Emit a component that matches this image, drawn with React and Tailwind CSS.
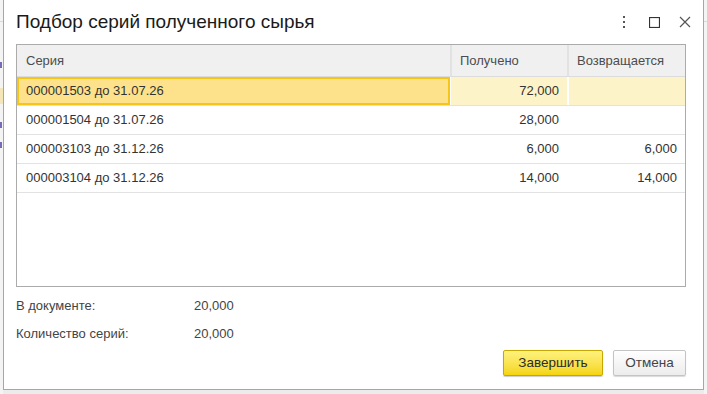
import React from "react";

const rows = [
  { name: "000001503 до 31.07.26", got: "72,000", back: "", selected: true },
  { name: "000001504 до 31.07.26", got: "28,000", back: "" },
  { name: "000003103 до 31.12.26", got: "6,000", back: "6,000" },
  { name: "000003104 до 31.12.26", got: "14,000", back: "14,000" },
];

const DotsIcon = () => (
  <svg width="4" height="12" viewBox="0 0 4 12">
    <rect x="1" y="0" width="2" height="2" fill="#555" />
    <rect x="1" y="5" width="2" height="2" fill="#555" />
    <rect x="1" y="10" width="2" height="2" fill="#555" />
  </svg>
);

const SquareIcon = () => (
  <svg width="11" height="11" viewBox="0 0 11 11">
    <rect x="0.5" y="0.5" width="10" height="10" fill="none" stroke="#333" strokeWidth="1.2" />
  </svg>
);

const CloseIcon = () => (
  <svg width="12" height="12" viewBox="0 0 12 12">
    <path d="M1 1 L11 11 M11 1 L1 11" stroke="#555" strokeWidth="1.2" />
  </svg>
);

const App = () => {
  return (
    <div
      className="w-[707px] h-[394px] flex bg-[#ececec] overflow-hidden text-[#333]"
      style={{ fontFamily: '"Liberation Sans", Arial, sans-serif' }}
    >
      {/* background window edge */}
      <div className="w-[3px] h-full flex flex-col bg-[#f4f4f4]">
        <div className="h-[22px] border-b border-[#d8d8d8]" />
        <div className="h-[40px]" />
        <div className="h-[6px] bg-[#7a68b8] w-[2px]" />
        <div className="h-[20px]" />
        <div className="h-[16px] bg-[#f4e6b8]" />
        <div className="h-[18px]" />
        <div className="h-[6px] bg-[#7a68b8] w-[2px]" />
        <div className="h-[14px]" />
        <div className="h-[6px] bg-[#7a68b8] w-[2px]" />
      </div>

      {/* dialog */}
      <div className="w-[701px] h-[390px] bg-white border-l border-r border-b border-[#a6a6a6] flex flex-col pl-[12px] pr-[17px]">
        <div className="h-[44px] flex items-center justify-between">
          <div className="text-[19px] text-[#1a1a1a] pt-[1px]">Подбор серий полученного сырья</div>
          <div className="flex items-center mr-[-17px]">
            <div className="w-[37px] flex justify-center">
              <DotsIcon />
            </div>
            <div className="w-[25px] flex justify-center">
              <SquareIcon />
            </div>
            <div className="w-[36px] flex justify-center">
              <CloseIcon />
            </div>
          </div>
        </div>

        {/* table */}
        <div className="h-[243px] border border-[#ababab] flex flex-col text-[13px]">
          <div className="h-[32px] flex bg-[#f0f0f0] border-b border-[#dcdcdc] text-[#4d4d4d]">
            <div className="w-[433px] flex items-center px-[9px]">Серия</div>
            <div className="w-[117px] flex items-center px-[8px] border-l-2 border-[#e2e2e2]">Получено</div>
            <div className="flex-1 flex items-center px-[8px] border-l-2 border-[#e2e2e2]">Возвращается</div>
          </div>
          {rows.map((r) => (
            <div
              key={r.name}
              className={
                r.selected
                  ? "h-[29px] flex border-b border-[#e2e2e2] bg-[#fdf3c8]"
                  : "h-[29px] flex border-b border-[#e2e2e2]"
              }
            >
              <div
                className={
                  r.selected
                    ? "w-[433px] flex items-center px-[7px] bg-[#fde28b] border-2 border-[#f5c518]"
                    : "w-[433px] flex items-center px-[9px]"
                }
              >
                {r.name}
              </div>
              <div
                className={
                  r.selected
                    ? "w-[117px] flex items-center justify-end pr-[8px] border-l border-white"
                    : "w-[117px] flex items-center justify-end pr-[8px]"
                }
              >
                {r.got}
              </div>
              <div
                className={
                  r.selected
                    ? "flex-1 flex items-center justify-end pr-[8px] border-l-2 border-white"
                    : "flex-1 flex items-center justify-end pr-[8px]"
                }
              >
                {r.back}
              </div>
            </div>
          ))}
        </div>

        {/* totals */}
        <div className="mt-[5px] flex flex-col text-[13px] text-[#444]">
          <div className="h-[28px] flex items-center">
            <div className="w-[178px]">В документе:</div>
            <div>20,000</div>
          </div>
          <div className="h-[28px] flex items-center">
            <div className="w-[178px]">Количество серий:</div>
            <div>20,000</div>
          </div>
        </div>

        <div className="mt-[2px] flex justify-end gap-[10px] text-[13.5px]">
          <button className="w-[100px] h-[26px] rounded-[2px] border border-[#c8a800] bg-gradient-to-b from-[#fff27a] to-[#f5d500] text-[#2b2b2b] shadow-[0_1px_1px_rgba(0,0,0,0.2)]">
            Завершить
          </button>
          <button className="w-[73px] h-[26px] rounded-[2px] border border-[#c4c4c4] bg-gradient-to-b from-white to-[#ececec] text-[#444] shadow-[0_1px_1px_rgba(0,0,0,0.15)]">
            Отмена
          </button>
        </div>
      </div>

      {/* background right edge */}
      <div className="w-[3px] h-full flex flex-col bg-[#f4f4f4]">
        <div className="h-[22px] border-b border-[#d8d8d8]" />
      </div>
    </div>
  );
};

export default App;
